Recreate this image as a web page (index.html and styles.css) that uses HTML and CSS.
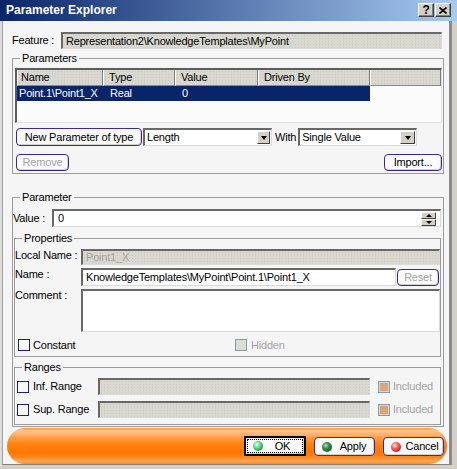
FILE: index.html
```html
<!DOCTYPE html>
<html>
<head>
<meta charset="utf-8">
<title>Parameter Explorer</title>
<link rel="stylesheet" href="styles.css">
</head>
<body>
<div class="window">
  <div class="titlebar">
    <span class="title">Parameter Explorer</span>
    <div class="tbtns">
      <span class="tbtn help">?</span>
      <span class="tbtn close"><svg width="8" height="7" viewBox="0 0 8 7"><path d="M0.5 0.5L7.5 6.5M7.5 0.5L0.5 6.5" stroke="#000" stroke-width="1.6"/></svg></span>
    </div>
  </div>
  <div class="frame">
    <div class="client">
      <div class="feature-row">
        <span class="feature-lbl">Feature :</span>
        <div class="field dis feature-field">Representation2\KnowledgeTemplates\MyPoint</div>
      </div>

      <fieldset class="group g-params">
        <legend>Parameters</legend>
        <div class="table">
          <div class="thead">
            <div class="th">Name</div>
            <div class="th">Type</div>
            <div class="th">Value</div>
            <div class="th">Driven By</div>
            <div class="th"></div>
          </div>
          <div class="trow">
            <div class="td">Point.1\Point1_X</div>
            <div class="td">Real</div>
            <div class="td">0</div>
            <div class="td"></div>
          </div>
        </div>
        <div class="prow prow1">
          <button class="btn btn-new">New Parameter of type</button>
          <div class="combo combo-len"><span class="ctext">Length</span><span class="drop"><i></i></span></div>
          <span class="with">With</span>
          <div class="combo combo-val"><span class="ctext">Single Value</span><span class="drop wide"><i></i></span></div>
        </div>
        <div class="prow prow2">
          <button class="btn dis btn-remove">Remove</button>
          <button class="btn btn-import">Import...</button>
        </div>
      </fieldset>

      <fieldset class="group g-param">
        <legend>Parameter</legend>
        <div class="vrow">
          <span class="vlbl">Value :</span>
          <div class="field vfield">
            <span>0</span>
            <span class="spin"><span><i class="up"></i></span><span><i class="down"></i></span></span>
          </div>
        </div>

        <fieldset class="group g-props">
          <legend>Properties</legend>
          <div class="prop-row r-local">
            <span class="plbl">Local Name :</span>
            <div class="field dis grey local-field">Point1_X</div>
          </div>
          <div class="prop-row r-name">
            <span class="plbl">Name :</span>
            <div class="field name-field">KnowledgeTemplates\MyPoint\Point.1\Point1_X</div>
            <button class="btn dis btn-reset">Reset</button>
          </div>
          <div class="prop-row r-comment">
            <span class="plbl">Comment :</span>
            <div class="field comment-field"></div>
          </div>
          <div class="prop-row r-check">
            <span class="chk chk-constant"><span class="cb"></span><span class="cb-text">Constant</span></span>
            <span class="chk"><span class="cb hid"></span><span class="cb-text grey">Hidden</span></span>
          </div>
        </fieldset>

        <fieldset class="group g-ranges">
          <legend>Ranges</legend>
          <div class="rrow">
            <span class="cb"></span>
            <span class="rlbl">Inf. Range</span>
            <div class="field dis range-field"></div>
            <span class="cb inc"></span>
            <span class="inc-text grey">Included</span>
          </div>
          <div class="rrow">
            <span class="cb"></span>
            <span class="rlbl">Sup. Range</span>
            <div class="field dis range-field"></div>
            <span class="cb inc"></span>
            <span class="inc-text grey">Included</span>
          </div>
        </fieldset>
      </fieldset>

      <div class="bar">
        <div class="dbtn ok"><span class="focus"><span class="ball b-ok"></span><span class="dtext">OK</span></span></div>
        <div class="dbtn"><span class="ball b-apply"></span><span class="dtext">Apply</span></div>
        <div class="dbtn"><span class="ball b-cancel"></span><span class="dtext">Cancel</span></div>
      </div>
    </div>
  </div>
</div>
</body>
</html>
```

FILE: styles.css
```css
* { box-sizing: border-box; }
html, body { margin: 0; padding: 0; }
body {
  width: 457px; height: 469px; overflow: hidden;
  background: #d4d0c8;
  font-family: "Liberation Sans", Arial, sans-serif;
  font-size: 11px; line-height: 13px; color: #000;
  letter-spacing: -0.2px;
}
.window { width: 457px; height: 469px; display: flex; flex-direction: column; }

/* title bar */
.titlebar {
  flex: none; height: 21px;
  display: flex; align-items: center; justify-content: space-between;
  padding: 0 6px 1px 6px;
  background: linear-gradient(to right, #0a246a 0%, #a6caf0 100%);
}
.title { color: #fff; font-weight: bold; font-size: 12px; letter-spacing: 0; }
.tbtns { display: flex; gap: 1px; }
.tbtn {
  width: 16px; height: 14px; background: #d4d0c8;
  border: 1px solid; border-color: #fff #404040 #404040 #fff;
  box-shadow: inset -1px -1px #808080;
  display: flex; align-items: center; justify-content: center;
  font-weight: bold; font-size: 12px; line-height: 12px;
}

/* frame + client */
.frame {
  flex: 1; display: flex; min-height: 0;
  border-left: 2px solid #dcdcdc;
  border-right: 5px solid #d4d0c8;
  border-bottom: 4px solid #d4d0c8;
}
.client {
  flex: 1; min-width: 0;
  display: flex; flex-direction: column;
  background: #f5f5f5;
  border-left: 1px solid #a0a0a0;
  border-right: 3px solid #8c8c8c;
  border-bottom: 1px solid #808080;
  padding-top: 11px;
}

/* fields */
.field {
  height: 17px;
  border-top: 2px solid #686868; border-left: 2px solid #686868;
  border-right: 1px solid #dadada; border-bottom: 1px solid #dadada;
  background: #fff;
  padding-left: 3px;
  display: flex; align-items: center;
  white-space: nowrap; overflow: hidden;
}
.field.dis {
  background-color: #d8d8d0;
  background-image: radial-gradient(circle, #c7cebf 0.7px, transparent 0.9px);
  background-size: 3px 3px;
}
.grey { color: #a3a3a3; }

.feature-row { display: flex; align-items: center; height: 17px; margin: 0 7px 0 9px; }
.feature-lbl { width: 49px; flex: none; }
.feature-field { flex: 1; }

/* group boxes */
.group {
  margin: 0; min-width: 0;
  border: 1px solid #9c9c9c;
}
.group > legend { padding: 0 2px; line-height: 13px; height: 13px; }

.g-params { margin: 3px 5px 0 9px; padding: 3px 1px 2px 2px; }
.g-params > legend { margin-left: 5px; }

.table {
  height: 55px;
  border-top: 2px solid #5c5c5c; border-left: 2px solid #5c5c5c;
  border-right: 1px solid #e2e2e2; border-bottom: 1px solid #e2e2e2;
  background: #fbfbfb;
}
.thead { display: grid; grid-template-columns: 86px 72px 83px 112px 1fr; height: 16px; }
.th {
  background-color: #d8d8d0;
  background-image: radial-gradient(circle, #c7cebf 0.7px, transparent 0.9px);
  background-size: 3px 3px;
  border-left: 1px solid #fff; border-right: 1px solid #7a7a7a; border-bottom: 1px solid #8a8a8a;
  padding-left: 5px; line-height: 15px; white-space: nowrap; overflow: hidden;
}
.th:first-child { padding-left: 3px; }
.trow { display: grid; grid-template-columns: 86px 72px 83px 112px; height: 15px; }
.td { background: #0a246a; color: #fff; line-height: 15px; padding-left: 7px; white-space: nowrap; }
.td:first-child { padding-left: 2px; }

.prow { display: flex; align-items: center; padding-left: 1px; }
.prow1 { margin-top: 5px; height: 18px; }
.prow2 { margin-top: 8px; height: 17px; justify-content: space-between; }

.btn {
  font: inherit; color: #000; letter-spacing: inherit;
  height: 18px; padding: 0; margin: 0;
  border: 1px solid #3b2a94; border-radius: 4px;
  background: #fbfbfb;
  box-shadow: inset -1px -1px #d0d0d0;
  display: inline-flex; align-items: center; justify-content: center;
  white-space: nowrap;
}
.btn.dis { color: #a3a3a3; }
.btn-new { width: 126px; }
.btn-remove { width: 53px; height: 17px; }
.btn-import { width: 58px; height: 17px; }

.combo {
  height: 18px; display: flex; align-items: center;
  border-top: 2px solid #686868; border-left: 2px solid #686868;
  border-right: 1px solid #dadada; border-bottom: 1px solid #dadada;
  background: #fff; padding-left: 2px;
}
.combo-len { width: 129px; margin-left: 1px; }
.combo-val { width: 119px; }
.ctext { flex: 1; white-space: nowrap; }
.drop {
  width: 13px; height: 13px; margin-right: 1px; flex: none;
  background: #d4d0c8;
  border: 1px solid; border-color: #fff #404040 #404040 #fff;
  display: flex; align-items: center; justify-content: center;
}
.drop.wide { width: 15px; }
.drop i {
  width: 0; height: 0;
  border-left: 3.5px solid transparent; border-right: 3.5px solid transparent;
  border-top: 4px solid #000;
}
.with { margin: 0 2px 0 3px; }

/* Parameter group */
.g-param { margin: 17px 5px 0 9px; padding: 5px 0 1px 0; }
.g-param > legend { margin-left: 7px; }
.vrow { display: flex; align-items: center; height: 18px; margin-right: 2px; }
.vlbl { width: 39px; flex: none; }
.vfield { flex: 1; height: 18px; padding-left: 4px; padding-right: 4px; justify-content: space-between; }
.spin { width: 15px; height: 14px; display: flex; flex-direction: column; }
.spin > span {
  flex: 1; background: #d4d0c8;
  border: 1px solid; border-color: #fff #404040 #404040 #fff;
  display: flex; align-items: center; justify-content: center;
}
.spin i { width: 0; height: 0; border-left: 3px solid transparent; border-right: 3px solid transparent; }
.spin i.up { border-bottom: 3px solid #000; }
.spin i.down { border-top: 3px solid #000; }

.g-props { margin: 5px 2px 0 1px; padding: 4px 0 4px 0; }
.g-props > legend, .g-ranges > legend { margin-left: 7px; }
.prop-row { display: flex; align-items: flex-start; }
.plbl { width: 66px; flex: none; white-space: nowrap; }
.r-local { height: 16px; }
.local-field { flex: 1; height: 16px; padding-left: 3px; }
.r-name { margin-top: 3px; height: 18px; }
.name-field { flex: 1; height: 18px; padding-left: 3px; }
.btn-reset { width: 42px; height: 17px; margin: 1px 1px 0 1px; }
.r-comment { margin-top: 3px; }
.comment-field { flex: 1; height: 43px; }
.r-check { margin-top: 6px; height: 14px; align-items: center; }
.chk { display: flex; align-items: center; }
.chk-constant { width: 220px; padding-left: 3px; }
.cb-text { margin-left: 3px; }
.chk + .chk .cb-text { margin-left: 4px; }

.cb { width: 12px; height: 12px; flex: none; border: 1px solid #231d7c; background: #f8f8f8; }
.cb.hid {
  border-color: #7f9db9; background-color: #e4e4d6;
  background-image: radial-gradient(circle, #d2d8c4 0.6px, transparent 0.8px);
  background-size: 2px 2px;
}
.cb.inc { border-color: #7f9db9; background: #d6a67c; box-shadow: inset 0 0 0 1px #ead2bd; }

.g-ranges { margin: 4px 2px 0 1px; padding: 4px 0 6px 0; }
.rrow { display: flex; align-items: center; height: 17px; padding-left: 2px; }
.rrow + .rrow { margin-top: 6px; }
.rlbl { width: 65px; margin-left: 4px; flex: none; }
.range-field { width: 272px; height: 17px; flex: none; margin-right: 8px; }
.inc-text { margin-left: 3px; }

/* orange button bar */
.bar {
  margin: 1px 2px 0 4px; height: 36px; flex: none;
  border-radius: 18px;
  background: linear-gradient(to bottom,
    #ff8a1a 0px, #ffc48e 2px, #ffb474 6px, #ff9b40 10px, #ff8210 16px,
    #ff7600 24px, #ff8a26 30px, #ffa85a 33px, #ff8a20 36px);
  display: flex; justify-content: flex-end; align-items: flex-start;
  padding: 9px 3px 0 0; gap: 8px;
}
.dbtn {
  width: 61px; height: 19px;
  border: 1px solid #3b2a94; border-radius: 4px;
  background: #fafafa; box-shadow: inset -1px -1px #d0d0d0;
  display: flex; align-items: center; padding-left: 7px;
}
.dbtn.ok {
  width: 62px; height: 20px; margin-top: -1px;
  border: 2px solid #000; border-radius: 1px;
  padding: 1px;
}
.focus {
  flex: 1; height: 100%;
  border: 1px dotted #000;
  display: flex; align-items: center; padding-left: 5px;
}
.ball { width: 10px; height: 10px; border-radius: 50%; flex: none; }
.b-ok { background: radial-gradient(circle at 38% 35%, #f0fff0 0, #7ee09a 30%, #22a050 70%, #0d6a30 100%); }
.b-apply { background: radial-gradient(circle at 38% 35%, #b8e0b8 0, #3a8a50 35%, #155a2c 75%, #0a3a1a 100%); }
.b-cancel { background: radial-gradient(circle at 38% 35%, #fff0f0 0, #ff7070 30%, #e01818 70%, #900000 100%); }
.dtext { flex: 1; text-align: center; }
```
